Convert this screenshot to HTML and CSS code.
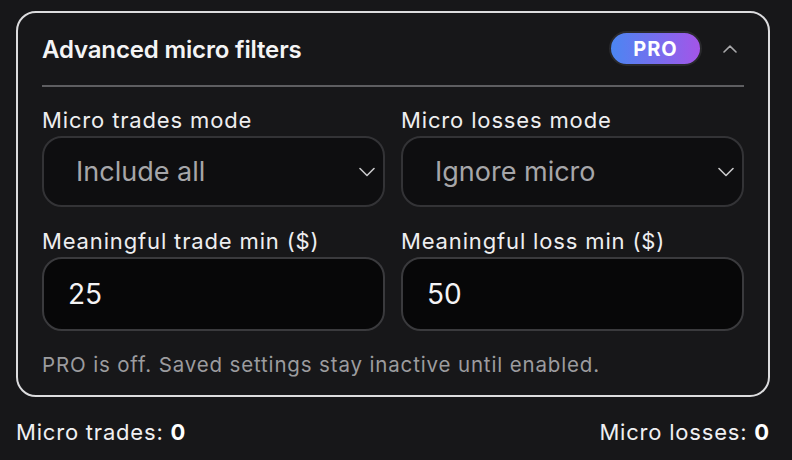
FILE: index.html
```html
<!DOCTYPE html>
<html>
<head>
<meta charset="utf-8">
<link rel="stylesheet" href="styles.css">
</head>
<body>
<div class="page">
  <section class="card">
    <header class="card-head">
      <h2 class="title">Advanced micro filters</h2>
      <span class="pro">PRO</span>
      <svg class="chev-up" width="14" height="8" viewBox="0 0 14 8"><path d="M1 7 L7 1.2 L13 7" fill="none" stroke="#a9a9ab" stroke-width="1.6" stroke-linecap="round" stroke-linejoin="round"/></svg>
    </header>
    <div class="grid">
      <div class="field">
        <div class="label">Micro trades mode</div>
        <div class="select"><span>Include all</span><svg width="16" height="10" viewBox="0 0 16 10"><path d="M1 1.5 L8 8.5 L15 1.5" fill="none" stroke="#c8c8ca" stroke-width="1.6" stroke-linecap="round" stroke-linejoin="round"/></svg></div>
      </div>
      <div class="field">
        <div class="label">Micro losses mode</div>
        <div class="select"><span>Ignore micro</span><svg width="16" height="10" viewBox="0 0 16 10"><path d="M1 1.5 L8 8.5 L15 1.5" fill="none" stroke="#c8c8ca" stroke-width="1.6" stroke-linecap="round" stroke-linejoin="round"/></svg></div>
      </div>
      <div class="field">
        <div class="label">Meaningful trade min ($)</div>
        <div class="input">25</div>
      </div>
      <div class="field">
        <div class="label">Meaningful loss min ($)</div>
        <div class="input">50</div>
      </div>
    </div>
    <p class="hint">PRO is off. Saved settings stay inactive until enabled.</p>
  </section>
  <footer class="stats">
    <span>Micro trades: <b>0</b></span>
    <span>Micro losses: <b>0</b></span>
  </footer>
</div>
</body>
</html>
```
FILE: styles.css
```css
html, body {
  margin: 0;
  background: #171719;
}
body {
  font-family: Inter, "Noto Sans", sans-serif;
  color: #ececee;
}
.page {
  width: 754px;
  padding: 11px 0 0 16px;
}
.card {
  border: 2px solid #dcdcde;
  border-radius: 20px;
  padding: 18px 24px 18px 24px;
}
.card-head {
  display: flex;
  align-items: center;
  height: 35px;
  padding-bottom: 19px;
  border-bottom: 2px solid #5e5e61;
}
.title {
  margin: 0;
  flex: 1;
  font-size: 24px;
  font-weight: 600;
  line-height: 29px;
  color: #f4f4f5;
  letter-spacing: -0.15px;
  padding-top: 2px;
}
.pro {
  display: flex;
  align-items: center;
  justify-content: center;
  width: 89px;
  height: 31px;
  border: 2px solid #29292c;
  border-radius: 18px;
  background: linear-gradient(90deg, #4b86f2 0%, #7a6cee 55%, #a455e8 100%);
  color: #ffffff;
  font-size: 20px;
  font-weight: 700;
  letter-spacing: 1px;
}
.chev-up {
  margin-left: 21px;
  margin-right: 7px;
}
.grid {
  display: grid;
  grid-template-columns: 1fr 1fr;
  column-gap: 16px;
  row-gap: 21px;
  margin-top: 20px;
}
.field {
  display: flex;
  flex-direction: column;
  gap: 3px;
}
.label {
  font-size: 22px;
  line-height: 26px;
  color: #eeeef0;
  letter-spacing: 0.85px;
}
.select {
  display: flex;
  align-items: center;
  justify-content: space-between;
  height: 67px;
  border: 2px solid #333336;
  border-radius: 20px;
  background: #0e0e10;
  padding: 0 8px 0 32px;
  font-size: 27px;
  color: #a6a6a9;
}
.input {
  display: flex;
  align-items: center;
  height: 70px;
  border: 2px solid #3a3a3d;
  border-radius: 20px;
  background: #070708;
  padding: 0 24px;
  font-size: 28px;
  color: #f4f4f5;
}
.hint {
  margin: 22px 0 0;
  font-size: 20.5px;
  line-height: 24px;
  color: #9c9c9f;
  letter-spacing: 0.85px;
}
.stats {
  display: flex;
  justify-content: space-between;
  margin-top: 22px;
  font-size: 22px;
  line-height: 26px;
  color: #f0f0f2;
  letter-spacing: 0.8px;
}
.stats b {
  font-weight: 700;
  color: #ffffff;
}
```
